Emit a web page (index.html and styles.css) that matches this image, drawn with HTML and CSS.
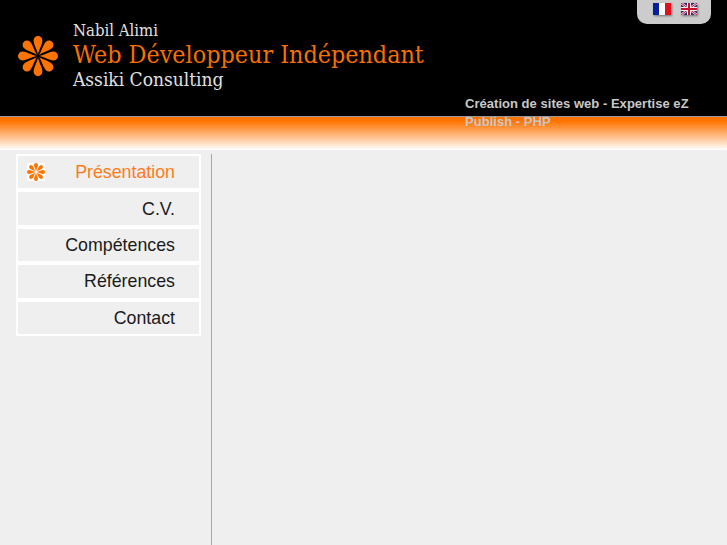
FILE: index.html
```html
<!DOCTYPE html>
<html lang="fr">
<head>
<meta charset="utf-8">
<title>Nabil Alimi - Web Développeur Indépendant</title>
<link rel="stylesheet" href="styles.css">
</head>
<body>
<svg class="defs" width="0" height="0" aria-hidden="true">
  <defs>
    <g id="flower">
      <path id="p" d="M0 -1.5 C-.7 -6 -4.4 -11.5 -4.4 -15.6 A4.4 4.4 0 0 1 4.4 -15.6 C4.4 -11.5 .7 -6 0 -1.5Z"/>
      <use href="#p" transform="rotate(45)"/>
      <use href="#p" transform="rotate(90)"/>
      <use href="#p" transform="rotate(135)"/>
      <use href="#p" transform="rotate(180)"/>
      <use href="#p" transform="rotate(225)"/>
      <use href="#p" transform="rotate(270)"/>
      <use href="#p" transform="rotate(315)"/>
    </g>
  </defs>
</svg>
<header class="header">
  <div class="lang">
    <svg class="flag" width="18" height="12" viewBox="0 0 18 12"><rect width="6" height="12" fill="#00209f"/><rect x="6" width="6" height="12" fill="#fff"/><rect x="12" width="6" height="12" fill="#e0101c"/></svg>
    <svg class="flag" width="16" height="12" viewBox="0 0 16 12"><rect width="16" height="12" fill="#2a2a6e"/><path d="M0 0L16 12M16 0L0 12" stroke="#e8e0e4" stroke-width="2.4"/><path d="M0 0L16 12M16 0L0 12" stroke="#c8102e" stroke-width="1"/><path d="M8 0V12M0 6H16" stroke="#eee" stroke-width="4"/><path d="M8 0V12M0 6H16" stroke="#c8102e" stroke-width="2"/></svg>
  </div>
  <div class="brand">
    <svg class="logo" width="40" height="40" viewBox="-20 -20 40 40"><use href="#flower" fill="#ff7300"/></svg>
    <div class="titles">
      <div class="name">Nabil Alimi</div>
      <div class="role">Web Développeur Indépendant</div>
      <div class="company">Assiki Consulting</div>
    </div>
  </div>
  <p class="tagline">Création de sites web - Expertise eZ Publish - PHP</p>
</header>
<div class="band"></div>
<main class="main">
  <nav class="menu">
    <a class="item active" href="#"><span class="bullet"><svg width="18" height="18" viewBox="-20 -20 40 40"><use href="#flower" fill="#ff7300"/></svg></span>Présentation</a>
    <a class="item" href="#">C.V.</a>
    <a class="item" href="#">Compétences</a>
    <a class="item" href="#">Références</a>
    <a class="item" href="#">Contact</a>
  </nav>
  <div class="content"></div>
</main>
</body>
</html>
```
FILE: styles.css
```css
html, body { margin: 0; padding: 0; height: 100%; }
body {
  background: #efefef;
  font-family: "Liberation Sans", Arial, sans-serif;
  display: flex;
  flex-direction: column;
  overflow: hidden;
}
.defs { position: absolute; }
.header {
  position: relative;
  height: 116px;
  flex: none;
  background: #000;
  border-bottom: 1px solid #999;
  display: flex;
  flex-direction: column;
}
.lang {
  position: absolute;
  top: 0;
  right: 16px;
  width: 74px;
  height: 24px;
  box-sizing: border-box;
  padding: 3px 0 0 16px;
  display: flex;
  gap: 10px;
  align-items: flex-start;
  background: #cccccc;
  border-radius: 0 0 10px 10px;
}
.flag { filter: drop-shadow(1px 1px 1px rgba(0,0,0,.45)); }
.brand {
  display: flex;
  align-items: center;
  gap: 15px;
  padding: 20px 0 0 18px;
}
.titles {
  display: flex;
  flex-direction: column;
  font-family: "DejaVu Serif", serif;
  font-stretch: condensed;
}
.name { color: #e0e0e0; font-size: 16.6px; line-height: 21px; }
.role { color: #f57000; font-size: 24.85px; line-height: 27px; }
.company { color: #e0e0e0; font-size: 19px; line-height: 23px; }
.tagline {
  margin: 4px 0 0 465px;
  width: 240px;
  color: #c8c8c8;
  font-size: 13px;
  letter-spacing: .03px;
  font-weight: bold;
  line-height: 18px;
}
.band {
  flex: none;
  height: 33px;
  background: linear-gradient(#ff7300 0, #ff7300 4px, #ffffff 100%);
}
.main {
  flex: 1;
  display: flex;
  align-items: stretch;
  padding: 4px 0 0 16px;
}
.menu {
  width: 185px;
  align-self: flex-start;
  box-sizing: border-box;
  display: flex;
  flex-direction: column;
  background: #fff;
  padding: 2px;
  gap: 4px;
}
.item {
  display: flex;
  align-items: center;
  justify-content: flex-end;
  position: relative;
  box-sizing: border-box;
  height: 32.4px;
  padding: 1px 24px 0 0;
  background: #efefef;
  color: #1a1a1a;
  text-decoration: none;
  font-size: 17.8px;
}
.item.active { color: #ff7a1a; }
.bullet {
  position: absolute;
  left: 9px;
  top: 7px;
  width: 18px;
  height: 18px;
  background: #fff;
  display: flex;
}
.content {
  margin-left: 10px;
  width: 0;
  border-left: 1px solid #aaa;
}
```
